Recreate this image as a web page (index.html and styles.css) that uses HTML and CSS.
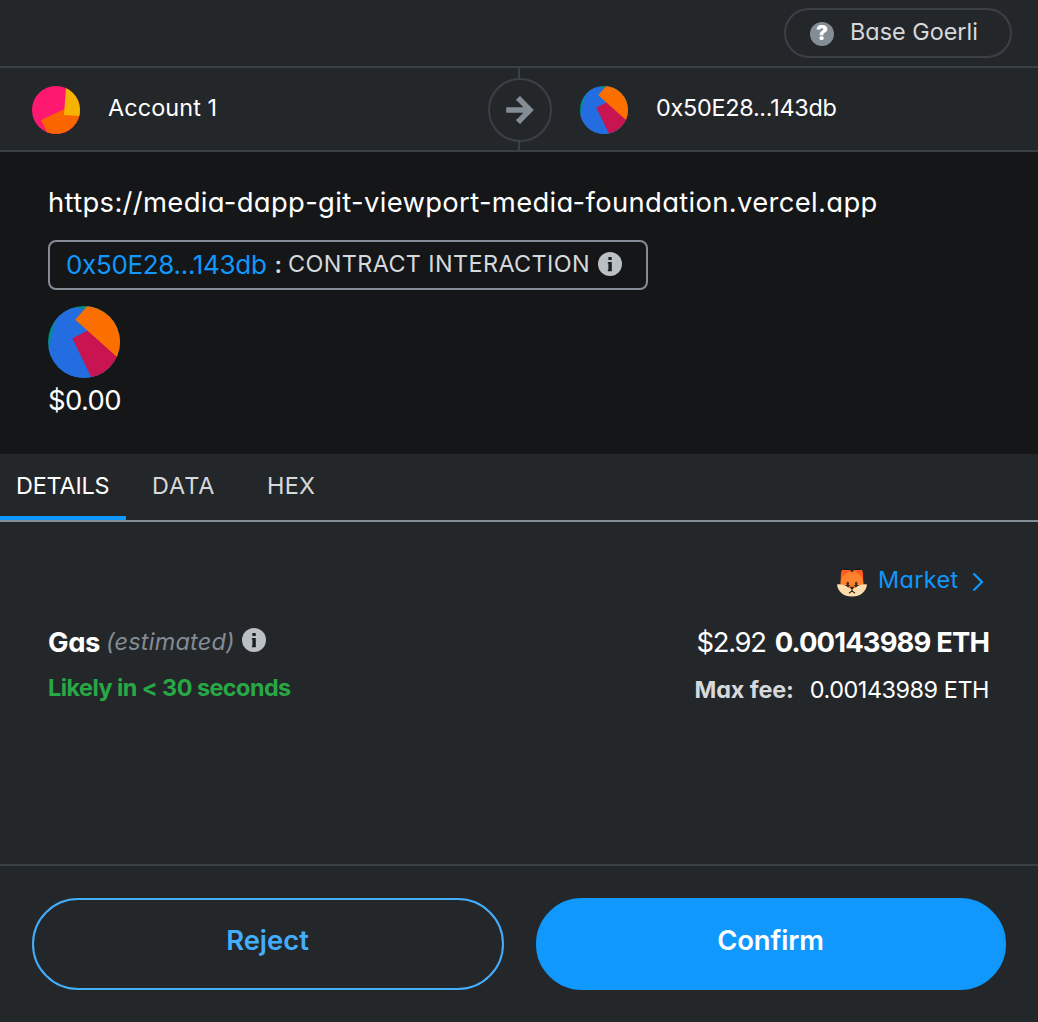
FILE: index.html
```html
<!DOCTYPE html>
<html lang="en">
<head>
<meta charset="utf-8">
<title>Confirm transaction</title>
<link rel="stylesheet" href="styles.css">
</head>
<body>
<svg width="0" height="0" class="defs" aria-hidden="true">
  <symbol id="contract" viewBox="0 0 72 72">
    <clipPath id="contract-clip"><circle cx="36" cy="36" r="36"/></clipPath>
    <g clip-path="url(#contract-clip)">
      <rect width="72" height="72" fill="#018e8c"/>
      <path fill="#246de1" d="M11.7-2.5 60 9.7V80H-9z"/>
      <path fill="#c81450" d="M24.3 32.3 42 23.5 80 55 60 80H47.6z"/>
      <path fill="#fb6f00" d="M40.5-1.5 27.3 13.7 74 55.6 80-4z"/>
    </g>
  </symbol>
  <symbol id="info" viewBox="0 0 24 24">
    <circle cx="12" cy="12" r="12" fill="#bbc0c5"/>
    <path fill="#1b1e20" d="M10.400 4.900h3.300v3h-3.300zM9.800 10h4v9.200h-4v-1.400h.6v-6.400h-.6z"/>
  </symbol>
</svg>
<div class="popup">
  <header class="network">
    <div class="network-pill">
      <span class="unknown">?</span>
      <span class="t network-name">Base Goerli</span>
    </div>
  </header>

  <section class="parties">
    <div class="party">
      <svg class="avatar" viewBox="0 0 48 48">
        <clipPath id="account-clip"><circle cx="24" cy="24" r="24"/></clipPath>
        <g clip-path="url(#account-clip)">
          <rect width="48" height="48" fill="#ff1870"/>
          <path fill="#fa6500" d="M9 34.3 33 22.8 60 28V60H22z"/>
          <path fill="#f5b400" d="M34.4-4 32 29l20 1.2V-4z"/>
        </g>
      </svg>
      <span class="t account">Account 1</span>
    </div>
    <div class="direction">
      <div class="arrow">
        <svg width="30" height="30" viewBox="0 0 30 30"><path d="M1.200 15H23M13.600 3.500 25 15 13.600 26.500" fill="none" stroke="#848c96" stroke-width="5.400"/><path d="m12.200 5 2.800-2.800M12.200 25l2.800 2.800" stroke="#848c96" stroke-width="2" stroke-linecap="round"/></svg>
      </div>
    </div>
    <div class="party recipient">
      <svg class="avatar"><use href="#contract"/></svg>
      <span class="t address">0x50E28...143db</span>
    </div>
  </section>

  <section class="summary">
    <div class="origin"><span class="t url">https://media-dapp-git-viewport-media-foundation.vercel.app</span></div>
    <div class="action">
      <span class="t contract">0x50E28...143db</span>
      <span class="t colon">:</span>
      <span class="t method">CONTRACT INTERACTION</span>
      <svg class="info"><use href="#info"/></svg>
    </div>
    <svg class="avatar-large"><use href="#contract"/></svg>
    <div class="amount"><span class="t usd">$0.00</span></div>
  </section>

  <nav class="tabs">
    <div class="tab active"><span class="t details-label">DETAILS</span></div>
    <div class="tab data"><span class="t data-label">DATA</span></div>
    <div class="tab hex"><span class="t hex-label">HEX</span></div>
  </nav>

  <main class="fees">
    <div class="estimate">
      <svg class="fox" viewBox="0 0 30 32">
        <path fill="#1d2022" d="M5 7 8.500 1 14 6.500H16L21.500 1 25.500 7z"/>
        <path fill="#ff5c1f" d="M3.800 19C3.800 12 3.600 7 5 5h8l2 2 2-2h8c1.400 2 1.200 7 1.200 14z"/>
        <path fill="#ff822d" d="M3.500 20C3.500 14 5 11 9 9l3-2.500L15 8l3-1.500L21 9c4 2 5.500 5 5.500 11L29 20H1z"/>
        <path fill="#ffddad" d="M0 19.500c4-.5 8 .2 11.500 3.200h7C22 19.700 26 19 30 19.500 29 27 23.500 31.500 15 31.500S1 27 0 19.500z"/>
        <path fill="#ff822d" d="M10.500 22.700 15 18.500l4.500 4.200-4.500 1z"/>
        <ellipse cx="10.800" cy="18.600" rx="1.200" ry="1.800" fill="#44261c"/><ellipse cx="19.200" cy="18.600" rx="1.200" ry="1.800" fill="#44261c"/>
        <path fill="#352018" d="M12.700 21.800h4.600L15.500 24.500v1.600h-1v-1.600z"/>
        <path d="M12 28.200 15 25.900l3 2.300" fill="none" stroke="#352018" stroke-width="1.100"/>
      </svg>
      <span class="t market">Market</span>
      <svg class="chevron" viewBox="0 0 14 20"><path d="m2.500 1.500 8.500 8.500-8.500 8.500" fill="none" stroke="#1098fc" stroke-width="2.200"/></svg>
    </div>
    <div class="row gas-row">
      <span class="t gas">Gas</span>
      <span class="t estimated">(estimated)</span>
      <svg class="info"><use href="#info"/></svg>
      <span class="t fiat">$2.92</span>
      <span class="t fee">0.00143989 ETH</span>
    </div>
    <div class="row max-row">
      <span class="t likely">Likely in &lt; 30 seconds</span>
      <span class="t max">Max fee:</span>
      <span class="t max-value">0.00143989 ETH</span>
    </div>
  </main>

  <footer class="actions">
    <button class="button reject"><span class="t reject-label">Reject</span></button>
    <button class="button confirm"><span class="t confirm-label">Confirm</span></button>
  </footer>
</div>
</body>
</html>
```
FILE: styles.css
```css
* { box-sizing: border-box; }
body {
  margin: 0;
  background: #24272a;
  color: #fff;
  font-family: Inter, "Liberation Sans", sans-serif;
  font-size: 23.4px;
  font-feature-settings: "cv11", "calt" 0;
}
.defs { position: absolute; }
.t { white-space: nowrap; flex: none; line-height: 30px; }
svg { display: block; flex: none; }
.popup { width: 1038px; height: 1022px; display: flex; flex-direction: column; }

.network {
  height: 68px;
  padding: 8px 26px 0;
  border-bottom: 2px solid #3b4046;
  display: flex;
  justify-content: flex-end;
}
.network-pill {
  width: 228px;
  height: 50px;
  border: 2px solid #3b4046;
  border-radius: 25px;
  padding: 0 0 3px 24px;
  display: flex;
  align-items: center;
  gap: 16px;
}
.unknown {
  width: 24px;
  height: 24px;
  margin-top: 5px;
  border-radius: 50%;
  background: #848c96;
  font-size: 20px;
  font-weight: 900;
  line-height: 22px;
  text-align: center;
}
.network-name { color: #d6d9dc; }

.parties {
  height: 84px;
  border-bottom: 2px solid #3b4046;
  display: grid;
  grid-template-columns: 488px 64px 1fr;
}
.party { display: flex; align-items: center; padding: 2px 0 0 32px; gap: 28px; }
.party .t { margin-bottom: 5px; }
.account { letter-spacing: 0.1px; }
.address { letter-spacing: -0.27px; }
.recipient { padding-left: 28px; }
.avatar { width: 48px; height: 48px; }
.direction {
  display: flex;
  align-items: center;
  padding-top: 2px;
  background: linear-gradient(#3b4046, #3b4046) 30px 0 / 2px 100% no-repeat;
}
.arrow {
  width: 64px;
  height: 64px;
  border: 2px solid #3b4046;
  border-radius: 50%;
  background: #24272a;
  display: grid;
  place-items: center;
}

.summary { height: 302px; padding: 35px 48px 0; background: #141618; }
.origin { height: 53px; display: flex; font-size: 27.4px; letter-spacing: 0.34px; }
.action {
  width: 600px;
  height: 50px;
  border: 2px solid #848c96;
  border-radius: 8px;
  padding-left: 16px;
  display: flex;
  align-items: center;
}
.contract { color: #1098fc; font-size: 26px; letter-spacing: -0.32px; }
.method, .colon { color: #d6d9dc; }
.colon { margin: 0 6px 0 8px; font-weight: 600; }
.method { margin: 0 8px 2px 0; letter-spacing: 0.39px; }
.action .info { margin-bottom: 2px; }
.avatar-large { width: 72px; height: 72px; margin-top: 16px; }
.amount { display: flex; padding-top: 7px; font-size: 27.4px; letter-spacing: -0.6px; }

.tabs { height: 68px; border-bottom: 2px solid #848c96; display: flex; color: #d6d9dc; }
.tab { padding: 17px 0 0; height: 66px; }
.active { width: 126px; padding-left: 16px; color: #fff; border-bottom: 4px solid #1098fc; letter-spacing: -0.2px; }
.data { width: 141px; padding-left: 26px; letter-spacing: 1px; }
.hex { letter-spacing: 0.3px; }

.fees { height: 342px; padding: 39px 48px 0; }
.estimate { height: 40px; display: flex; justify-content: flex-end; align-items: center; color: #1098fc; }
.fox { width: 30px; height: 32px; margin-right: 11px; }
.market { letter-spacing: 0.4px; margin-bottom: 2px; }
.chevron { width: 14px; height: 20px; margin: 2px 5px 0 12.5px; }
.row { display: flex; align-items: center; }
.gas-row { height: 42px; margin-top: 20px; }
.gas, .fee { font-size: 27.4px; font-weight: 700; }
.gas { letter-spacing: -0.4px; }
.fiat { font-size: 27.4px; letter-spacing: -1.3px; margin: 0 9px 0 auto; }
.fee { letter-spacing: -0.85px; margin-right: 1px; }
.estimated { color: #848c96; font-style: italic; letter-spacing: 0.25px; margin: 0 7px 0 6px; }
.info { width: 24px; height: 24px; }
.gas-row .info { margin-bottom: 4px; }
.likely { color: #28a745; font-weight: 700; letter-spacing: -0.54px; }
.max { margin: 3px 16px 0 auto; color: #d6d9dc; font-weight: 700; letter-spacing: -0.1px; }
.max-value { margin: 3px 1px 0 0; letter-spacing: -0.45px; }
.max-row { height: 30px; margin-top: 10px; }

.actions { height: 158px; border-top: 2px solid #3b4046; padding: 32px; display: flex; gap: 32px; }
.button {
  width: 472px;
  height: 92px;
  border: 2px solid #43aefc;
  border-radius: 46px;
  background: none;
  color: #43aefc;
  font: inherit;
  font-size: 27.4px;
  font-weight: 600;
  padding: 0 1px 8px 0;
}
.confirm { width: 470px; border-color: #1098fc; background: #1098fc; color: #fff; letter-spacing: -0.1px; }
```
